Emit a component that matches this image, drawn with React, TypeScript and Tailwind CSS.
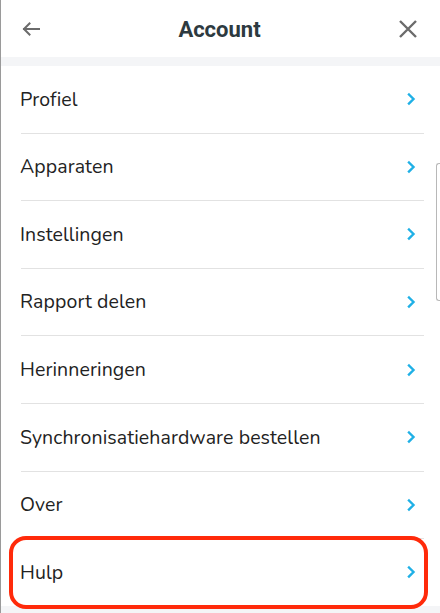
import React from 'react';

// Account menu screen
const items = [
  'Profiel',
  'Apparaten',
  'Instellingen',
  'Rapport delen',
  'Herinneringen',
  'Synchronisatiehardware bestellen',
  'Over',
  'Hulp',
];

const Chevron: React.FC = () => (
  <svg width="10" height="14" viewBox="0 0 10 14" fill="none" className="shrink-0">
    <path d="M3 2.5 L7.5 7 L3 11.5" stroke="#1fb0e6" strokeWidth="2.4" strokeLinecap="square" strokeLinejoin="miter" />
  </svg>
);

const Row: React.FC<{ label: string; last?: boolean; highlight?: boolean }> = ({ label, last, highlight }) => (
  <div className="relative">
    <div className="flex items-center justify-between h-[66.6px] pl-[19px] pr-6">
      <span className="text-[19.5px] text-[#222] tracking-[0.1px]" style={{ fontFamily: 'Nunito, "Open Sans", sans-serif' }}>
        {label}
      </span>
      <Chevron />
    </div>
    {!last && <div className="ml-5 mr-4 h-px bg-[#e2e2e2]" />}
    {highlight && (
      <div className="absolute left-[8px] right-[12px] top-[-3px] bottom-[-3px] rounded-[17px] border-[4px] border-[#ff2a0a] pointer-events-none" />
    )}
  </div>
);

export default function App() {
  return (
    <div className="relative w-[440px] h-[613px] overflow-hidden bg-white border-l border-[#9a9a9a]">
      <div className="flex items-center justify-between h-[57px] px-5">
        <svg width="20" height="16" viewBox="0 0 20 16" fill="none">
          <path d="M18 8 H3 M8.5 2.5 L3 8 L8.5 13.5" stroke="#6b6b6b" strokeWidth="2" strokeLinecap="square" />
        </svg>
        <h1 className="text-[22px] font-bold text-[#2d3a40] mt-[2px]" style={{ fontFamily: 'Roboto, sans-serif' }}>
          Account
        </h1>
        <svg width="20" height="20" viewBox="0 0 20 20" fill="none" className="mr-[2px]">
          <path d="M2 2 L18 18 M18 2 L2 18" stroke="#6b6b6b" strokeWidth="2.4" />
        </svg>
      </div>
      <div className="h-[9px] bg-[#f4f5f7]" />
      <div className="flex flex-col">
        {items.map((label, i) => (
          <Row key={label} label={label} last={i === items.length - 1} highlight={label === 'Hulp'} />
        ))}
      </div>
      <div className="h-[10px] bg-[#f4f5f7]" />
      <div className="absolute right-0 top-[163px] w-[4px] h-[138px] rounded-l-[3px] border border-r-0 border-[#b8b8b8] bg-white" />
    </div>
  );
}
